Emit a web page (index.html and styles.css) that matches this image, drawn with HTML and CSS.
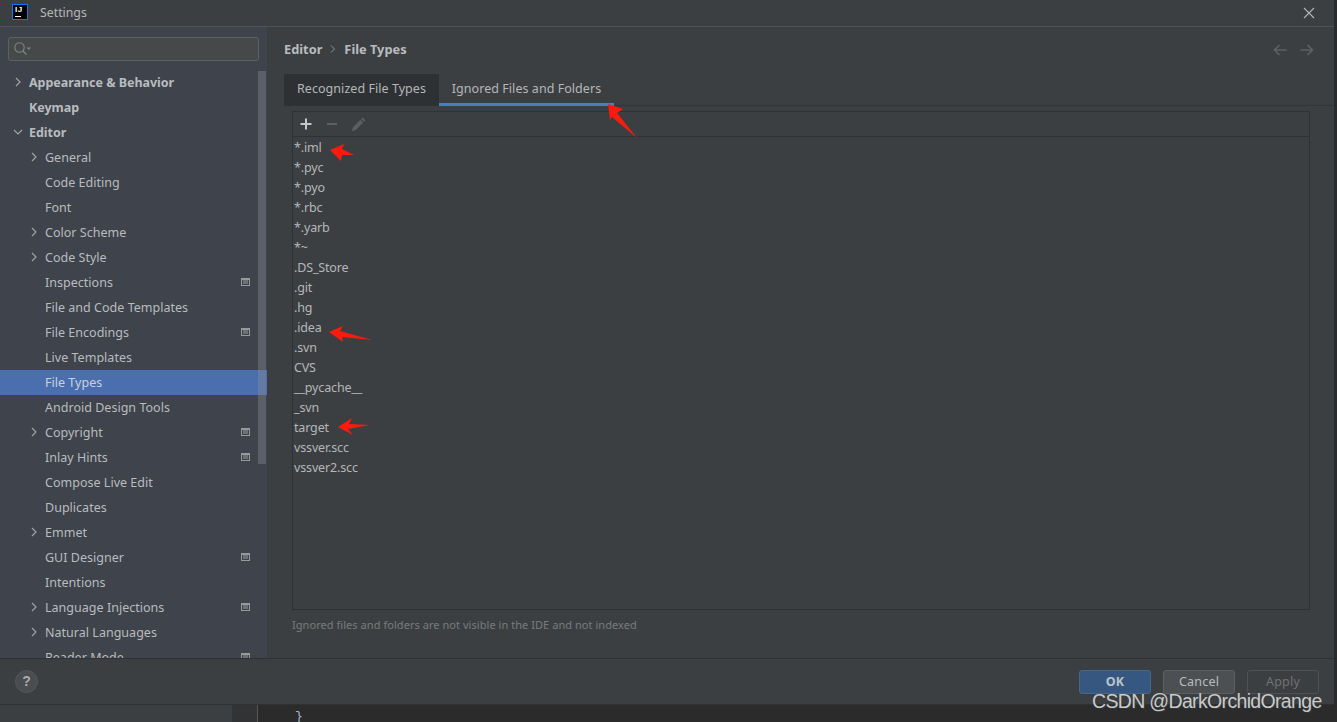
FILE: index.html
```html
<!DOCTYPE html>
<html lang="en">
<head>
<meta charset="utf-8">
<title>Settings</title>
<link rel="stylesheet" href="styles.css">
</head>
<body>
<div class="screen">
  <div class="dialog">
    <header class="titlebar">
      <div class="app-logo"><span class="logo-text">IJ</span><span class="logo-bar"></span></div>
      <span class="title">Settings</span>
      <svg class="close" width="12" height="12" viewBox="0 0 12 12"><path d="M1 1l10 10M11 1L1 11" stroke="#b4b7b9" stroke-width="1.1" fill="none"/></svg>
    </header>
    <div class="main">
      <aside class="sidebar">
        <div class="search">
          <svg width="20" height="16" viewBox="0 0 20 16"><circle cx="6.5" cy="6.5" r="4.7" fill="none" stroke="#7f8487" stroke-width="1.1"/><path d="M10 10l3.6 3.6" stroke="#7f8487" stroke-width="1.3"/><path d="M13.5 6.5h4.5l-2.25 2.4z" fill="#7f8487"/></svg>
        </div>
        <div class="tree-wrap">
          <ul class="tree">
            <li class="row l0 bold"><svg class="chev" viewBox="0 0 10 10"><path d="M3 1l4 4-4 4"/></svg><span>Appearance &amp; Behavior</span></li>
            <li class="row l0 bold"><span>Keymap</span></li>
            <li class="row l0 bold"><svg class="chev" viewBox="0 0 10 10"><path d="M1 3l4 4 4-4"/></svg><span>Editor</span></li>
            <li class="row l1"><svg class="chev" viewBox="0 0 10 10"><path d="M3 1l4 4-4 4"/></svg><span>General</span></li>
            <li class="row l1"><span>Code Editing</span></li>
            <li class="row l1"><span>Font</span></li>
            <li class="row l1"><svg class="chev" viewBox="0 0 10 10"><path d="M3 1l4 4-4 4"/></svg><span>Color Scheme</span></li>
            <li class="row l1"><svg class="chev" viewBox="0 0 10 10"><path d="M3 1l4 4-4 4"/></svg><span>Code Style</span></li>
            <li class="row l1"><span>Inspections</span><i class="scope"></i></li>
            <li class="row l1"><span>File and Code Templates</span></li>
            <li class="row l1"><span>File Encodings</span><i class="scope"></i></li>
            <li class="row l1"><span>Live Templates</span></li>
            <li class="row l1 selected"><span>File Types</span></li>
            <li class="row l1"><span>Android Design Tools</span></li>
            <li class="row l1"><svg class="chev" viewBox="0 0 10 10"><path d="M3 1l4 4-4 4"/></svg><span>Copyright</span><i class="scope"></i></li>
            <li class="row l1"><span>Inlay Hints</span><i class="scope"></i></li>
            <li class="row l1"><span>Compose Live Edit</span></li>
            <li class="row l1"><span>Duplicates</span></li>
            <li class="row l1"><svg class="chev" viewBox="0 0 10 10"><path d="M3 1l4 4-4 4"/></svg><span>Emmet</span></li>
            <li class="row l1"><span>GUI Designer</span><i class="scope"></i></li>
            <li class="row l1"><span>Intentions</span></li>
            <li class="row l1"><svg class="chev" viewBox="0 0 10 10"><path d="M3 1l4 4-4 4"/></svg><span>Language Injections</span><i class="scope"></i></li>
            <li class="row l1"><svg class="chev" viewBox="0 0 10 10"><path d="M3 1l4 4-4 4"/></svg><span>Natural Languages</span></li>
            <li class="row l1"><span>Reader Mode</span><i class="scope"></i></li>
          </ul>
          <div class="scrollbar"></div>
        </div>
      </aside>
      <section class="content">
        <div class="crumbs">
          <span>Editor</span>
          <svg width="8" height="10" viewBox="0 0 8 10"><path d="M2 1.5L5.5 5 2 8.5" stroke="#8f9294" fill="none"/></svg>
          <span>File Types</span>
          <div class="nav-arrows">
            <svg width="14" height="12" viewBox="0 0 14 12"><path d="M13.5 6H1.5M6.5 1L1.5 6l5 5" stroke="#5d6163" stroke-width="1.6" fill="none"/></svg>
            <svg width="14" height="12" viewBox="0 0 14 12"><path d="M.5 6h12M7.5 1l5 5-5 5" stroke="#5d6163" stroke-width="1.6" fill="none"/></svg>
          </div>
        </div>
        <div class="tabs">
          <div class="tab tab-dark">Recognized File Types</div>
          <div class="tab tab-active">Ignored Files and Folders</div>
        </div>
        <div class="panel">
          <div class="toolbar">
            <svg width="12" height="12" viewBox="0 0 12 12"><path d="M6 .5v11M.5 6h11" stroke="#c5c8ca" stroke-width="2" fill="none"/></svg>
            <svg width="12" height="12" viewBox="0 0 12 12"><path d="M1 6h10" stroke="#5c5f61" stroke-width="2" fill="none"/></svg>
            <svg width="15" height="15" viewBox="0 0 15 15"><path d="M1 14l.8-3.6 7.6-7.6 2.8 2.8-7.6 7.6zM10.2 2l1.4-1.4 2.8 2.8L13 4.8z" fill="#5c5f61"/></svg>
          </div>
          <ul class="files">
            <li>*.iml</li><li>*.pyc</li><li>*.pyo</li><li>*.rbc</li><li>*.yarb</li><li>*~</li><li>.DS_Store</li><li>.git</li><li>.hg</li><li>.idea</li><li>.svn</li><li>CVS</li><li>__pycache__</li><li>_svn</li><li>target</li><li>vssver.scc</li><li>vssver2.scc</li>
          </ul>
        </div>
        <p class="hint">Ignored files and folders are not visible in the IDE and not indexed</p>
      </section>
    </div>
    <footer class="footer">
      <div class="help">?</div>
      <div class="buttons">
        <div class="btn btn-ok">OK</div>
        <div class="btn btn-cancel">Cancel</div>
        <div class="btn btn-apply">Apply</div>
      </div>
    </footer>
  </div>
  <div class="under">
    <div class="under-side"></div>
    <div class="under-gutter"></div>
    <div class="under-editor"><span class="brace">}</span></div>
  </div>
  <svg class="annot" width="1337" height="722" viewBox="0 0 1337 722">
    <g fill="#fb1a0d">
      <path d="M608 104l15 5-6 4 20 25-25-21-2 3z"/>
      <path d="M330 150l14-6-2 5 12 6-12 0-1 6z"/>
      <path d="M329 332l14-6-3 5 32 9-30-3 1 5z"/>
      <path d="M338 427l14-9-3 6 21 1-22 4 5 6z"/>
    </g>
  </svg>
  <div class="watermark">CSDN @DarkOrchidOrange</div>
</div>
</body>
</html>
```
FILE: styles.css
```css
* { box-sizing: border-box; }
html, body { margin: 0; padding: 0; }
body { width: 1337px; height: 722px; overflow: hidden; background: #2b2b2b; font-family: "Noto Sans", "Open Sans", sans-serif; font-size: 13px; color: #bbbbbb; }
ul { list-style: none; margin: 0; padding: 0; }
.screen { position: relative; width: 1337px; height: 722px; display: flex; flex-direction: column; }
.dialog { width: 1334px; height: 705px; background: #3c3f41; display: flex; flex-direction: column; border-bottom: 1px solid #2f3133; }
.titlebar { height: 27px; flex: none; display: flex; align-items: center; padding: 0 19px 1px 12px; border-bottom: 1px solid #505355; background: #3c3f41; }
.app-logo { width: 16px; height: 16px; background: #000; border: 1px solid #0a7bf0; position: relative; display: flex; flex-direction: column; padding: 0 0 0 2px; margin-top: -1px; }
.logo-text { font: bold 8px/9px "Liberation Sans", sans-serif; color: #fff; letter-spacing: .5px; }
.logo-bar { width: 6px; height: 1px; background: #fff; margin-top: 2px; }
.title { margin-left: 12px; color: #b4b7b9; font-size: 12.3px; }
.close { margin-left: auto; }
.main { flex: 1; display: flex; min-height: 0; }
.sidebar { width: 267px; flex: none; background: #3e434c; display: flex; flex-direction: column; overflow: hidden; }
.search { height: 24px; flex: none; margin: 10px 8px 9px; background: #45494a; border: 1px solid #5e6164; border-radius: 3px; display: flex; align-items: center; padding-left: 4px; }
.tree-wrap { position: relative; flex: 1; min-height: 0; overflow: hidden; }
.row { height: 25px; display: flex; align-items: center; position: relative; font-size: 12.5px; color: #b9bcbe; letter-spacing: .02px; white-space: nowrap; }
.l0 { padding-left: 29px; }
.l1 { padding-left: 45px; }
.bold { font-weight: 700; font-size: 12.5px; letter-spacing: -.03px; }
.chev { position: absolute; width: 10px; height: 10px; top: 7px; fill: none; stroke: #a0a3a5; stroke-width: 1.2; }
.l0 .chev { left: 13px; }
.l1 .chev { left: 29px; }
.selected { background: #4b6eaf; color: #c9d1de; }
.scope { position: absolute; left: 241px; top: 8px; width: 9px; height: 8px; border: 1px solid #969a9d; background: #6d7175; box-shadow: inset 0 1px 0 #969a9d, inset 0 0 0 1px #3e434c; }
.scrollbar { position: absolute; left: 258px; top: 1px; width: 8px; height: 393px; background: rgba(139, 142, 150, .38); }
.content { flex: 1; min-width: 0; padding: 0 24px 0 17px; display: flex; flex-direction: column; }
.crumbs { height: 47px; flex: none; display: flex; align-items: center; gap: 7px; font-weight: 700; font-size: 12.8px; padding-bottom: 4px; position: relative; color: #b9bcbe; }
.nav-arrows { margin-left: auto; display: flex; gap: 13px; margin-right: -4px; padding-top: 2px; }
.tabs { height: 32px; flex: none; display: flex; border-bottom: 1px solid #323537; margin: 0 -24px 0 0; }
.tab { padding-top: 6px; font-size: 12.5px; letter-spacing: .05px; color: #b4b7b9; text-align: center; height: 32px; }
.tab-dark { width: 155px; background: #2e3133; }
.tab-active { width: 175px; border-bottom: 3px solid #4a80b9; }
.panel { margin: 5px 0 0 8px; height: 499px; flex: none; border: 1px solid #2f3234; display: flex; flex-direction: column; }
.toolbar { height: 25px; flex: none; border-bottom: 1px solid #2f3234; display: flex; align-items: center; padding-left: 7px; gap: 14px; }
.toolbar svg:last-child { margin-left: -1px; }
.files { padding: 1px 0 0 1px; }
.files li { height: 20px; line-height: 20px; font-size: 12.5px; color: #b4b7b9; letter-spacing: -.15px; }
.hint { margin: 7px 0 0 8px; font-size: 11px; line-height: 16px; color: #787b7d; letter-spacing: .05px; }
.footer { height: 46px; flex: none; border-top: 1px solid #2f3133; background: #3c3f41; display: flex; align-items: center; padding: 0 15px; }
.help { width: 23px; height: 23px; border-radius: 50%; background: #4a4d4f; border: 1px solid #55585a; color: #a9acae; font: bold 14px/21px "Liberation Sans", sans-serif; text-align: center; }
.buttons { margin-left: auto; display: flex; gap: 12px; }
.btn { width: 72px; height: 24px; border-radius: 3px; font-size: 12.5px; line-height: 24px; text-align: center; letter-spacing: .2px; }
.btn-ok { background: #365880; border: 1px solid #43688c; color: #bcc3cb; font-weight: 700; line-height: 22px; }
.btn-cancel { background: #4c5052; border: 1px solid #5e6060; color: #b9bcbe; line-height: 22px; }
.btn-apply { background: #3c3f41; border: 1px solid #4e5254; color: #6f7274; line-height: 22px; }
.under { flex: 1; display: flex; min-height: 0; }
.under-side { width: 232px; background: #3c3f41; }
.under-gutter { width: 26px; background: #313335; border-right: 1px solid #555759; }
.under-editor { flex: 1; background: #2b2b2b; padding-left: 37px; color: #a9b7c6; font: 13px/17px "Liberation Mono", monospace; position: relative; overflow: hidden; }
.brace { display: block; margin-top: 3px; }
.annot { position: absolute; left: 0; top: 0; pointer-events: none; }
.watermark { position: absolute; left: 1092px; top: 688px; font: 19.5px/26px "Liberation Sans", sans-serif; letter-spacing: -.66px; color: #c8cacb; text-shadow: 1px 1px 1px #3a3a3a; white-space: nowrap; }
```
